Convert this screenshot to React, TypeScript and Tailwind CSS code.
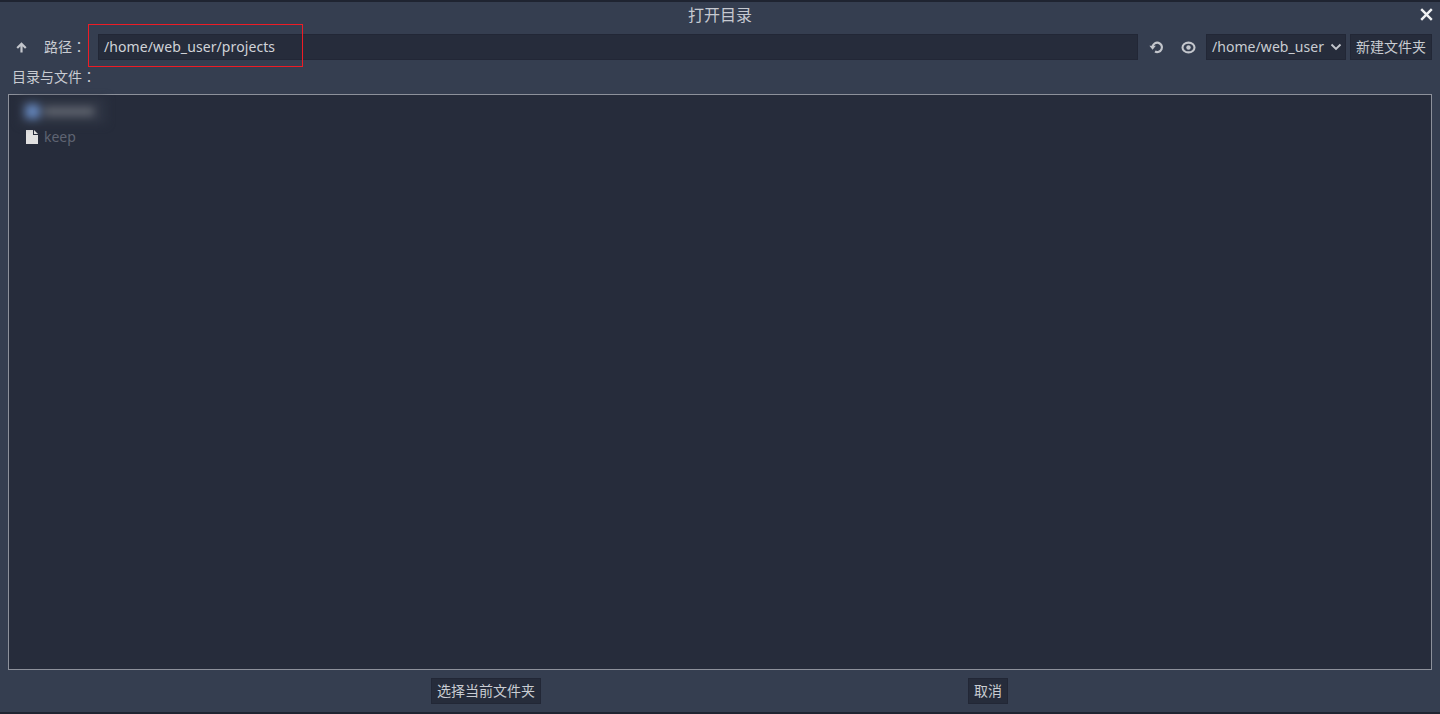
import React from "react";

function Btn({ children, className = "" }: { children: React.ReactNode; className?: string }) {
  return (
    <div className={"h-[26px] pb-[2px] flex items-center justify-center bg-[#262c3b] border border-[#222736] text-[#c9ccd2] text-[14px] " + className}>
      {children}
    </div>
  );
}

function Colon() {
  return <span className="font-['Noto_Sans_CJK_TC',sans-serif]">：</span>;
}

export default function App() {
  return (
    <div className="relative w-[1440px] h-[714px] overflow-hidden flex flex-col bg-[#353e50] border-t-2 border-b-2 border-[#1f2431] text-[14px] text-[#c9ccd2] font-['Noto_Sans','Noto_Sans_CJK_SC',sans-serif]">
      <div className="relative h-[28px] pb-[2px] shrink-0 flex items-center justify-center text-[16px] text-[#c6c9d0]">
        打开目录
        <svg className="absolute right-[7px] top-[6px]" width="13" height="13" viewBox="0 0 13 13">
          <path d="M1.2 1.2L11.8 11.8M11.8 1.2L1.2 11.8" stroke="#f0f1f3" strokeWidth="2.4" fill="none" />
        </svg>
      </div>
      <div className="h-[26px] mt-[4px] shrink-0 flex items-center pl-[8px] pr-[8px]">
        <div className="w-[27px] flex justify-center">
          <svg width="11" height="11" viewBox="0 0 11 11">
            <path d="M5.5 10.5V2M1.2 6L5.5 1.7L9.8 6" stroke="#c3c6cc" strokeWidth="2.2" fill="none" />
          </svg>
        </div>
        <div className="ml-[9px] pb-[2px] w-[54px] text-[14px] whitespace-pre">路径<Colon /></div>
        <div className="w-[1040px] h-[26px] pb-[2px] flex items-center pl-[5px] bg-[#262c3b] border border-[#222736] text-[14px] tracking-[0.09px] text-[#d0d3d8]">
          /home/web_user/projects
        </div>
        <div className="w-[38px] flex justify-center">
          <svg className="mr-[1px]" width="15" height="14" viewBox="0 0 15 14" fill="none">
            <path d="M3.6 6.5A4.7 4.7 0 1 1 6 11.5" stroke="#c3c6cc" strokeWidth="2.2" />
            <path d="M0.4 5.8H6.8L3.6 9.8Z" fill="#c3c6cc" />
          </svg>
        </div>
        <div className="w-[24px] flex justify-center">
          <svg width="15" height="13" viewBox="0 0 15 13" fill="none">
            <ellipse cx="7.5" cy="6.5" rx="6" ry="4.9" stroke="#c3c6cc" strokeWidth="2.1" />
            <circle cx="7.5" cy="6.5" r="2.2" fill="#c3c6cc" />
          </svg>
        </div>
        <div className="ml-[6px] w-[140px] h-[26px] pb-[2px] flex items-center justify-between pl-[5px] pr-[3px] bg-[#262c3b] border border-[#222736] text-[14px] tracking-[0.05px]">
          <span>/home/web_user</span>
          <svg className="mt-[2px]" width="12" height="8" viewBox="0 0 12 8" fill="none">
            <path d="M1.5 1.5L6 6L10.5 1.5" stroke="#c3c6cc" strokeWidth="1.9" />
          </svg>
        </div>
        <Btn className="ml-[4px] w-[82px]">新建文件夹</Btn>
      </div>
      <div className="h-[20px] mt-[6px] pl-[12px] flex items-center shrink-0">目录与文件<Colon /></div>
      <div className="relative mt-[8px] mx-[8px] h-[576px] shrink-0 bg-[#262c3b] border border-[#8d919b]">
        <div className="h-[26px] mt-[3px] ml-[11px] w-[86px] flex items-center gap-[4px] pl-[5px] blur-[4px] bg-[#2e3443]">
          <div className="w-[15px] h-[15px] bg-[#6283b8] rounded-sm" />
          <div className="w-[50px] h-[9px] bg-[#60656f]" />
        </div>
        <div className="h-[26px] pb-[2px] ml-[17px] flex items-center gap-[6px] text-[#5f6472]">
          <svg className="mt-[2px]" width="12" height="14" viewBox="0 0 12 14">
            <path d="M0 0H7V5H12V14H0Z M8 0L12 4H8Z" fill="#e0e0e0" />
          </svg>
          <span>keep</span>
        </div>
      </div>
      <div className="mt-[8px] h-[26px] shrink-0 flex items-center pl-[431px]">
        <Btn className="w-[110px]">选择当前文件夹</Btn>
        <Btn className="ml-[427px] w-[40px]">取消</Btn>
      </div>
      <div className="absolute left-[88px] top-[22px] w-[215px] h-[43px] border border-[#ee1c25]" />
    </div>
  );
}
